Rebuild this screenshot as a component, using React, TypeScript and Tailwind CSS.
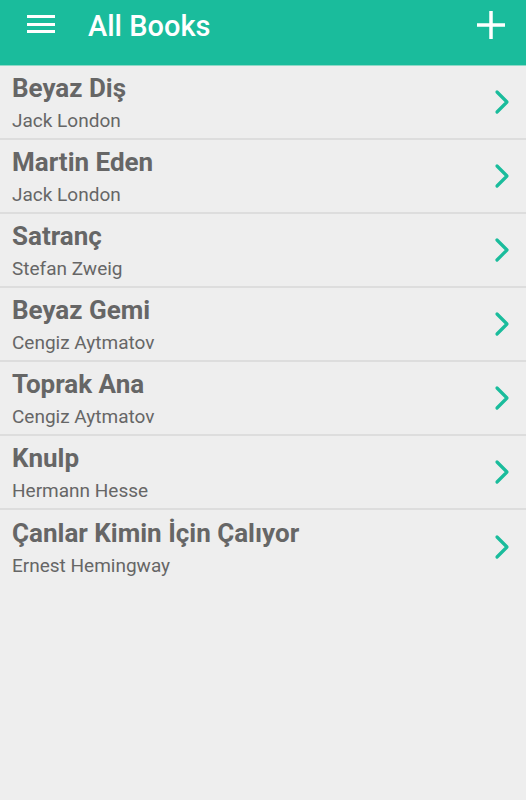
const books = [
  { title: "Beyaz Diş", author: "Jack London" },
  { title: "Martin Eden", author: "Jack London" },
  { title: "Satranç", author: "Stefan Zweig" },
  { title: "Beyaz Gemi", author: "Cengiz Aytmatov" },
  { title: "Toprak Ana", author: "Cengiz Aytmatov" },
  { title: "Knulp", author: "Hermann Hesse" },
  { title: "Çanlar Kimin İçin Çalıyor", author: "Ernest Hemingway" },
];

function Chevron() {
  return (
    <svg width="16" height="26" viewBox="0 0 16 26" fill="none">
      <polyline
        points="3,3 13,13 3,23"
        stroke="#1abc9c"
        strokeWidth="3.2"
        strokeLinecap="round"
        strokeLinejoin="round"
      />
    </svg>
  );
}

export default function App() {
  return (
    <div className="min-h-[800px] w-[526px] bg-[#eeeeee] font-['Roboto',sans-serif]">
      <header className="flex h-[66px] items-start border-b border-[#8fd9c7] bg-[#1abc9c]">
        <div className="ml-[27px] mt-[15px] flex w-[28px] flex-col gap-[4.5px]">
          <div className="h-[3px] bg-white" />
          <div className="h-[3px] bg-white" />
          <div className="h-[3px] bg-white" />
        </div>
        <h1 className="ml-[33px] mt-[9px] text-[29px] font-medium leading-[34px] text-white">
          All Books
        </h1>
        <div className="ml-auto mr-[21px] mt-[11px] flex">
          <svg width="28" height="28" viewBox="0 0 28 28">
            <rect x="0" y="12.25" width="28" height="3.5" fill="#fff" />
            <rect x="12.25" y="0" width="3.5" height="28" fill="#fff" />
          </svg>
        </div>
      </header>
      <ul>
        {books.map((b, i) => (
          <li
            key={b.title}
            className={`flex h-[74px] items-center pl-[12px] pr-[16px] ${
              i < books.length - 1 ? "border-b-2 border-[#dddddd]" : ""
            }`}
          >
            <div className="flex flex-1 flex-col pt-[1px]">
              <span className="text-[26px] font-bold leading-[30px] text-[#666666]">{b.title}</span>
              <span className="mt-[7px] text-[19px] leading-[22px] text-[#666666]">{b.author}</span>
            </div>
            <Chevron />
          </li>
        ))}
      </ul>
    </div>
  );
}
